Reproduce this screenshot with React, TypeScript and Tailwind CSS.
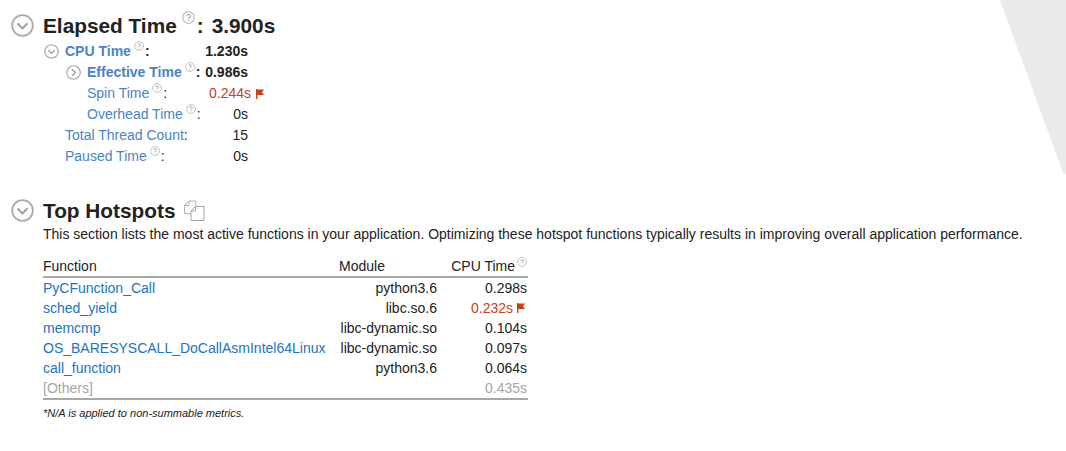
import React from "react";

function Help({ size = 10, className = "" }: { size?: number; className?: string }) {
  return (
    <svg width={size} height={size} viewBox="0 0 12 12" fill="none" className={`shrink-0 ${className}`}>
      <circle cx="6" cy="6" r="5.3" stroke="#b4b4b4" strokeWidth="1" />
      <path d="M4.4 4.8C4.4 3.8 5.1 3.2 6 3.2s1.7.6 1.7 1.5c0 1.3-1.7 1.3-1.7 2.6" stroke="#a0a0a0" strokeWidth="1" />
      <rect x="5.5" y="8.1" width="1" height="1" fill="#a0a0a0" />
    </svg>
  );
}

function Chevron({ size, dir = "down" }: { size: number; dir?: "down" | "right" }) {
  return (
    <svg width={size} height={size} viewBox="0 0 24 24" fill="none" className="shrink-0">
      <circle cx="12" cy="12" r="10.8" stroke="#ababab" strokeWidth="1.9" fill="#fdfdfd" />
      <path d={dir === "down" ? "M6.8 9.8 12 15l5.2-5.2" : "M9.8 6.8 15 12l-5.2 5.2"} stroke="#9a9a9a" strokeWidth="2.1" />
    </svg>
  );
}

function Flag() {
  return (
    <svg width="8" height="10" viewBox="0 0 8 10" className="shrink-0">
      <path d="M0 0h1.4v.6H8L6 3.2 8 6H1.4v4H0z" fill="#c8401c" />
    </svg>
  );
}

function Copy() {
  return (
    <svg width="22" height="22" viewBox="0 0 22 22" fill="none" className="shrink-0">
      <path d="M1.5 13.5V5.5L6 1h7v5M1.5 13.5h6M1.5 5.5H6V1" stroke="#b4b4b4" strokeWidth="1" />
      <path d="M8 20.5V11l4.5-4.5h8.5v14zM8 11h4.5V6.5" stroke="#a4a4a4" strokeWidth="1" fill="#fff" />
    </svg>
  );
}

type Metric = {
  label: string;
  value: string;
  left: string;
  labelW: string;
  bold?: boolean;
  help?: boolean;
  chevron?: "down" | "right";
  flagged?: boolean;
};

function MetricRow({ m }: { m: Metric }) {
  return (
    <div className="flex h-[21px] items-center whitespace-nowrap">
      <div className={`flex shrink-0 items-center ${m.left} ${m.labelW} ${m.bold ? "font-bold" : ""}`}>
        {m.chevron && (
          <span className="mr-[6px]">
            <Chevron size={15} dir={m.chevron} />
          </span>
        )}
        <span className="text-[#4a83c8]">{m.label}</span>
        {m.help && <Help size={10} className="relative top-[-6px] ml-[3px] mr-[1px]" />}
        <span className="text-[#222]">:</span>
      </div>
      {m.flagged ? (
        <span className="flex items-center text-[#c8401c]">
          <span>{m.value}</span>
          <span className="ml-[5px]">
            <Flag />
          </span>
        </span>
      ) : (
        <span className={`w-[60px] text-right text-[#222] ${m.bold ? "font-bold" : ""}`}>{m.value}</span>
      )}
    </div>
  );
}

const metrics: Metric[] = [
  { label: "CPU Time", value: "1.230s", left: "pl-[44px]", labelW: "w-[188px]", bold: true, help: true, chevron: "down" },
  { label: "Effective Time", value: "0.986s", left: "pl-[66px]", labelW: "w-[188px]", bold: true, help: true, chevron: "right" },
  { label: "Spin Time", value: "0.244s", left: "pl-[87px]", labelW: "w-[209px]", help: true, flagged: true },
  { label: "Overhead Time", value: "0s", left: "pl-[87px]", labelW: "w-[188px]", help: true },
  { label: "Total Thread Count", value: "15", left: "pl-[65px]", labelW: "w-[188px]" },
  { label: "Paused Time", value: "0s", left: "pl-[65px]", labelW: "w-[188px]", help: true },
];

const rows = [
  { fn: "PyCFunction_Call", mod: "python3.6", time: "0.298s" },
  { fn: "sched_yield", mod: "libc.so.6", time: "0.232s", flagged: true },
  { fn: "memcmp", mod: "libc-dynamic.so", time: "0.104s" },
  { fn: "OS_BARESYSCALL_DoCallAsmIntel64Linux", mod: "libc-dynamic.so", time: "0.097s" },
  { fn: "call_function", mod: "python3.6", time: "0.064s" },
];

export default function App() {
  return (
    <div className="relative h-[451px] w-[1066px] overflow-hidden bg-white pt-[13px] font-['Liberation_Sans',Arial,sans-serif] text-[14px] leading-[21px] text-[#222]">
      <svg width="66" height="174" viewBox="0 0 66 174" className="absolute right-0 top-0">
        <path d="M0 0H66V174H63.5Z" fill="#e9eaec" />
      </svg>

      <section>
        <div className="flex h-[25px] items-center pl-[11px]">
          <Chevron size={23} />
          <h1 className="ml-[9px] text-[20.8px] font-bold leading-[25px] text-[#222]">Elapsed Time</h1>
          <Help size={13} className="relative top-[-8px] ml-[5px]" />
          <span className="ml-[2px] text-[20.8px] font-bold leading-[25px]">:</span>
          <span className="ml-[8px] text-[20.8px] font-bold leading-[25px]">3.900s</span>
        </div>
        <div className="pt-[3px]">
          {metrics.map((m) => (
            <MetricRow key={m.label} m={m} />
          ))}
        </div>
      </section>

      <section className="mt-[31px]">
        <div className="flex h-[25px] items-center pl-[11px]">
          <Chevron size={23} />
          <h2 className="ml-[9px] text-[20.8px] font-bold leading-[25px] text-[#222]">Top Hotspots</h2>
          <span className="ml-[8px]">
            <Copy />
          </span>
        </div>
        <p className="pl-[43px] pt-[1px] leading-[20px]">
          This section lists the most active functions in your application. Optimizing these hotspot functions typically results in improving overall application performance.
        </p>
        <div className="ml-[43px] mt-[13px] w-[485px]">
          <div className="flex h-[21px] items-center border-b-2 border-[#a8a8a8] pb-[1px]">
            <span className="w-[296px]">Function</span>
            <span className="w-[98px]">Module</span>
            <span className="flex flex-1 items-center justify-end">
              CPU Time
              <Help size={10} className="relative top-[-4px] ml-[2px] mr-[1px]" />
            </span>
          </div>
          {rows.map((r) => (
            <div key={r.fn} className="flex h-[20px] items-center pr-[1px]">
              <span className="w-[283px] whitespace-nowrap text-[#1a73c8]">{r.fn}</span>
              <span className="w-[111px] text-right">{r.mod}</span>
              <span className={`flex flex-1 items-center justify-end ${r.flagged ? "text-[#c8401c]" : ""}`}>
                {r.time}
                {r.flagged && (
                  <span className="ml-[4px] mr-[2px]">
                    <Flag />
                  </span>
                )}
              </span>
            </div>
          ))}
          <div className="flex h-[22px] items-center border-b-2 border-[#a8a8a8] pr-[1px] text-[#a6a6a6]">
            <span className="w-[394px]">[Others]</span>
            <span className="flex-1 text-right">0.435s</span>
          </div>
          <p className="mt-[3px] text-[11px] italic leading-[20px] text-[#222]">*N/A is applied to non-summable metrics.</p>
        </div>
      </section>
    </div>
  );
}
